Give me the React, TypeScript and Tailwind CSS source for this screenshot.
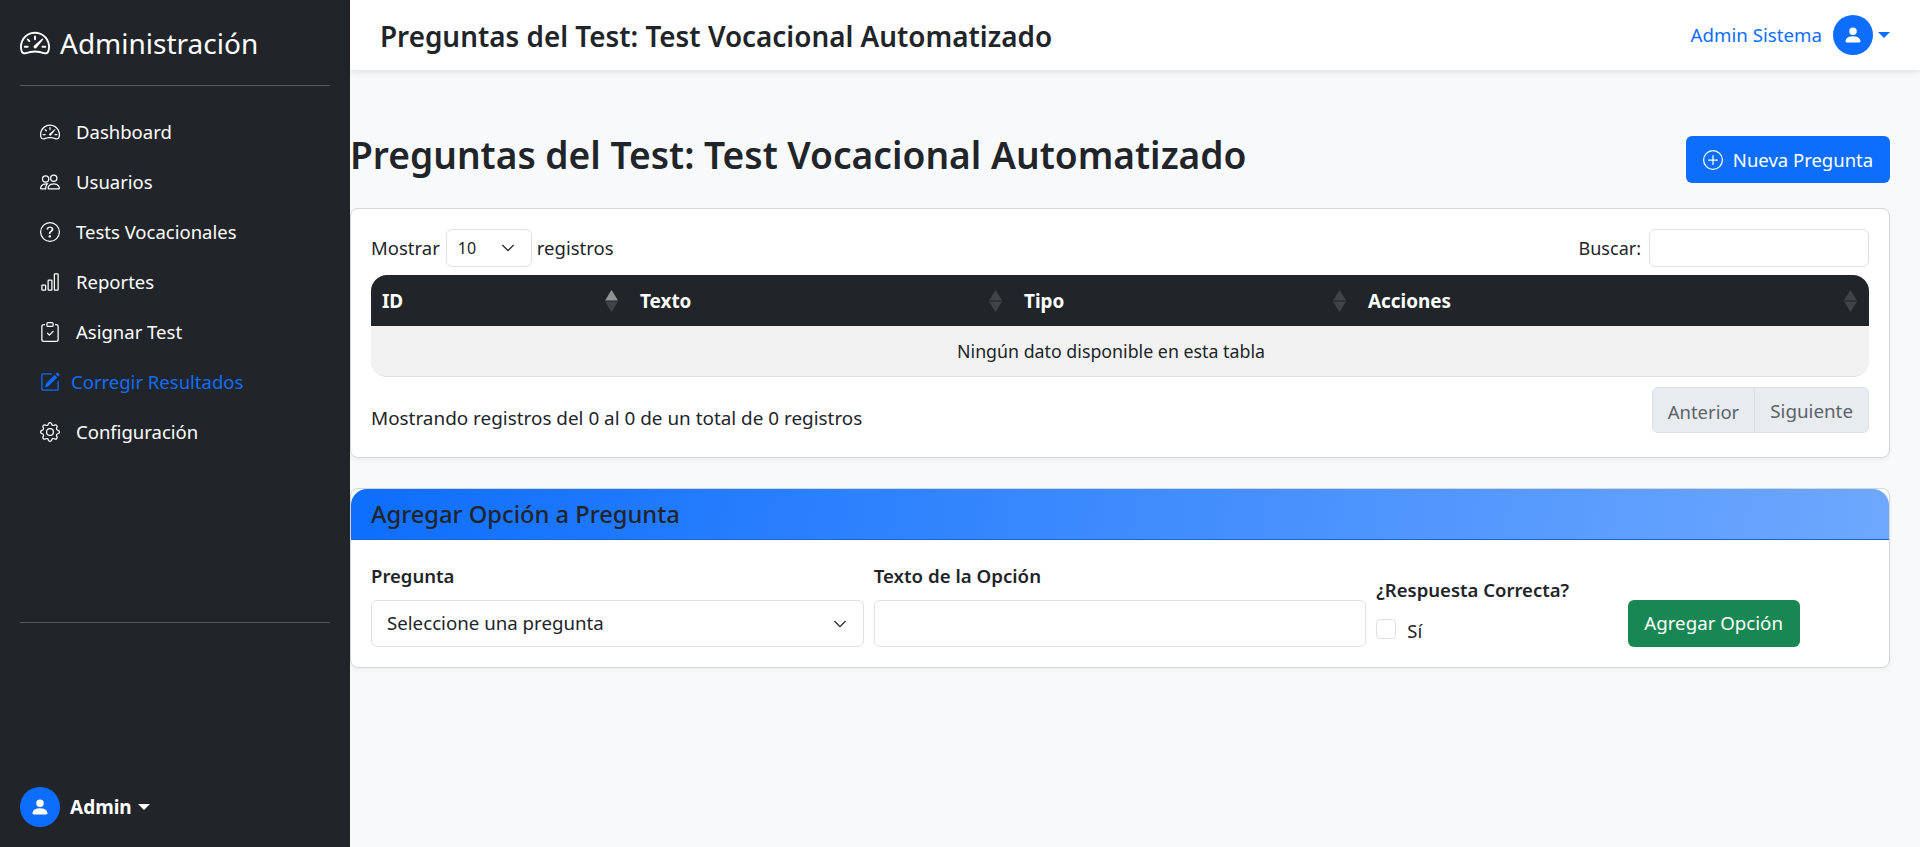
import React from "react";
import { BsSpeedometer2, BsPeople, BsQuestionCircle, BsBarChart, BsClipboardCheck, BsPencilSquare, BsGear, BsPersonFill, BsPlusCircle, BsChevronDown } from "react-icons/bs";

const nav = [
  { label: "Dashboard", Icon: BsSpeedometer2 },
  { label: "Usuarios", Icon: BsPeople },
  { label: "Tests Vocacionales", Icon: BsQuestionCircle },
  { label: "Reportes", Icon: BsBarChart },
  { label: "Asignar Test", Icon: BsClipboardCheck },
  { label: "Corregir Resultados", Icon: BsPencilSquare, active: true },
  { label: "Configuración", Icon: BsGear },
];

function Caret() {
  return <span className="inline-block w-0 h-0 border-x-[6px] border-x-transparent border-t-[6px] border-t-current" />;
}

function Sort({ up }: { up?: boolean }) {
  return (
    <svg width="13" height="22" viewBox="0 0 13 22" className="shrink-0">
      <polygon points="6.5,0 13,10.5 0,10.5" fill="#fff" opacity={up ? 0.5 : 0.14} />
      <polygon points="6.5,22 13,11.5 0,11.5" fill="#fff" opacity={0.14} />
    </svg>
  );
}

function Th({ label, up, className }: { label: string; up?: boolean; className: string }) {
  return (
    <div className={`flex items-center justify-between pr-[12px] pt-[1px] ${className}`}>
      <span className="font-bold text-white text-[18.9px]">{label}</span>
      <Sort up={up} />
    </div>
  );
}

export default function App() {
  return (
    <div className="flex h-[847px] overflow-hidden bg-[#f8f9fa] text-[#212529] font-['Noto_Sans',sans-serif] text-[18.5px]">
      <aside className="w-[350px] shrink-0 bg-[#212529] text-white flex flex-col px-[20px] pt-[20px] pb-[20px]">
        <div className="flex items-center h-[48px] pb-[2px]">
          <BsSpeedometer2 className="w-[30px] h-[30px] mr-[10px]" />
          <span className="text-[28px] leading-[40px]">Administración</span>
        </div>
        <hr className="mt-[17px] border-0 border-t border-[#55585c]" />
        <nav className="mt-[21px] flex flex-col">
          {nav.map(({ label, Icon, active }) => (
            <div key={label} className={`h-[50px] flex items-center pl-[20px] ${active ? "text-[#0d6efd]" : "text-white"}`}>
              <Icon className={`w-[20px] h-[20px] ${active ? "mr-[11px]" : "mr-[16px]"}`} />
              <span>{label}</span>
            </div>
          ))}
        </nav>
        <hr className="mt-auto border-0 border-t border-[#55585c]" />
        <div className="mt-[164px] flex items-center h-[40px]">
          <span className="w-[40px] h-[40px] rounded-full bg-[#0d6efd] flex items-center justify-center mr-[10px]">
            <BsPersonFill className="w-[20px] h-[20px] text-white" />
          </span>
          <span className="font-bold text-[19px] mr-[6px]">Admin</span>
          <Caret />
        </div>
      </aside>

      <div className="flex-1 min-w-0 flex flex-col">
        <header className="h-[70px] shrink-0 bg-white shadow-[0_2px_6px_rgba(0,0,0,0.1)] flex items-center justify-between pl-[30px] pr-[30px]">
          <h2 className="text-[27.85px] font-semibold leading-[36px] pt-[2px]">Preguntas del Test: Test Vocacional Automatizado</h2>
          <div className="flex items-center text-[#0d6efd]">
            <span className="mr-[11px] text-[18.7px]">Admin Sistema</span>
            <span className="w-[40px] h-[40px] rounded-full bg-[#0d6efd] flex items-center justify-center mr-[5px]">
              <BsPersonFill className="w-[20px] h-[20px] text-white" />
            </span>
            <span className="border-x-[6px] border-x-transparent border-t-[6px] border-t-[#0d6efd]" />
          </div>
        </header>

        <main className="pr-[30px] pt-[66px]">
          <div className="flex items-center justify-between h-[47px]">
            <h1 className="text-[37.15px] font-semibold leading-[48px] mt-[-9px]">Preguntas del Test: Test Vocacional Automatizado</h1>
            <button className="w-[204px] h-[47px] rounded-[6px] bg-[#0d6efd] text-white flex items-center justify-center">
              <BsPlusCircle className="w-[20px] h-[20px] mr-[10px]" />
              Nueva Pregunta
            </button>
          </div>

          <section className="mt-[25px] bg-white border border-[#d3d6da] rounded-[8px] h-[250px] pt-[20px] px-[20px] shadow-[0_2px_4px_rgba(0,0,0,0.05)]">
            <div className="flex items-center justify-between h-[38px]">
              <div className="flex items-center">
                <span>Mostrar</span>
                <span className="ml-[6px] mr-[5px] w-[86px] h-[38px] border border-[#dee2e6] rounded-[6px] flex items-center justify-between pl-[11px] pr-[16px] text-[16px]">
                  10
                  <BsChevronDown className="w-[14px] h-[14px] stroke-[0.6]" />
                </span>
                <span>registros</span>
              </div>
              <div className="flex items-center">
                <span className="mr-[8px] text-[18px]">Buscar:</span>
                <span className="w-[220px] h-[38px] border border-[#dee2e6] rounded-[6px] bg-white" />
              </div>
            </div>
            <div className="mt-[8px] rounded-[16px] overflow-hidden border-b border-[#dee2e6]">
              <div className="h-[51px] bg-[#212529] flex items-center">
                <Th label="ID" up className="w-[259px] pl-[11px]" />
                <Th label="Texto" className="w-[384px] pl-[10px]" />
                <Th label="Tipo" className="w-[344px] pl-[10px]" />
                <Th label="Acciones" className="flex-1 pl-[10px]" />
              </div>
              <div className="h-[50px] bg-[#f2f2f2] flex items-center justify-center text-[17.8px] pt-[1px] pr-[18px]">Ningún dato disponible en esta tabla</div>
            </div>
            <div className="mt-[10px] flex items-center justify-between">
              <span className="mt-[16px] text-[18.9px]">Mostrando registros del 0 al 0 de un total de 0 registros</span>
              <div className="flex h-[46px] rounded-[6px] border border-[#dee2e6] bg-[#e9ecef] text-[#5c636a] overflow-hidden">
                <span className="px-[15px] pt-[3px] flex items-center border-r border-[#dee2e6]">Anterior</span>
                <span className="px-[15px] pt-[3px] flex items-center text-[18.8px]">Siguiente</span>
              </div>
            </div>
          </section>

          <section className="mt-[30px] bg-white border border-[#d3d6da] rounded-[8px] h-[180px] shadow-[0_2px_4px_rgba(0,0,0,0.05)]">
            <div className="h-[51px] rounded-t-[16px] bg-[linear-gradient(100deg,#0d6efd,#6ea8fe)] border-b border-[#1a66d0] flex items-center px-[20px] pt-[2px]">
              <h3 className="text-[23.7px] font-medium leading-none">Agregar Opción a Pregunta</h3>
            </div>
            <div className="grid grid-cols-12 gap-x-[10px] items-end px-[20px] pt-[24px]">
              <div className="col-span-4">
                <label className="block font-semibold mb-[12px] leading-[24px]">Pregunta</label>
                <div className="h-[47px] border border-[#dee2e6] rounded-[6px] flex items-center justify-between pl-[15px] pr-[16px] text-[18.7px]">
                  Seleccione una pregunta
                  <BsChevronDown className="w-[14px] h-[14px] stroke-[0.6]" />
                </div>
              </div>
              <div className="col-span-4">
                <label className="block font-semibold mb-[12px] leading-[24px] text-[18.7px]">Texto de la Opción</label>
                <div className="h-[47px] border border-[#dee2e6] rounded-[6px]" />
              </div>
              <div className="col-span-2">
                <label className="block font-semibold mb-[15px] leading-[24px] whitespace-nowrap">¿Respuesta Correcta?</label>
                <div className="flex items-center h-[24px] mb-[6px]">
                  <span className="w-[20px] h-[20px] border border-[#dee2e6] rounded-[4px] mr-[11px]" />
                  <span className="pt-[3px]">Sí</span>
                </div>
              </div>
              <div className="col-span-2">
                <button className="w-[172px] h-[47px] rounded-[6px] bg-[#198754] text-white text-[18.7px]">Agregar Opción</button>
              </div>
            </div>
          </section>
        </main>
      </div>
    </div>
  );
}
